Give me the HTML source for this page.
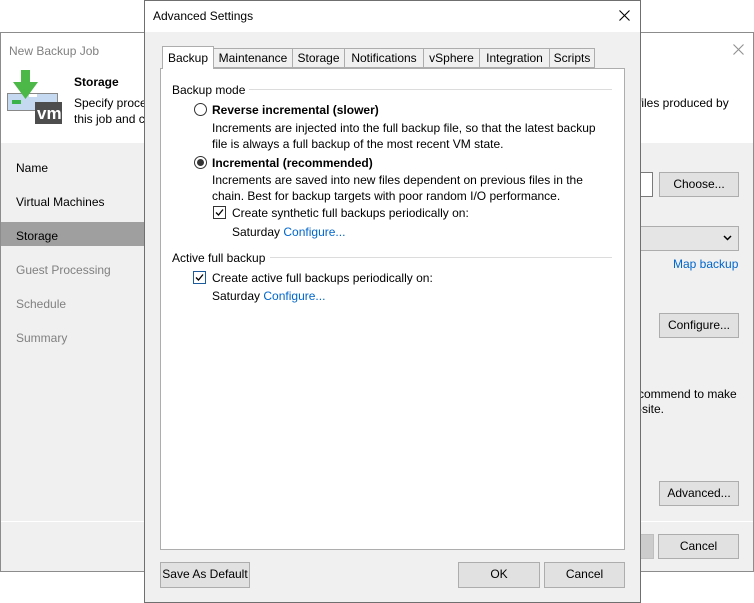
<!DOCTYPE html>
<html><head><style>
*{box-sizing:border-box;margin:0;padding:0}
body{width:754px;height:603px;background:#fff;position:relative;overflow:hidden;font-family:"Liberation Sans",sans-serif;font-size:12px;color:#000}
.a{position:absolute;white-space:nowrap}
.btn{position:absolute;background:#e1e1e1;border:1px solid #adadad;text-align:center;line-height:23px;font-size:12px}
.lk{color:#0066cc}
.tab{position:absolute;top:48px;height:20px;border:1px solid #adadad;background:#f0f0f0;line-height:19px;text-align:center;font-size:12px}
</style></head><body>
<div class="a" style="left:0;top:32px;width:754px;height:540px;border:1px solid #8c8c8c;background:#f0f0f0"></div>
<div class="a" style="left:1px;top:33px;width:752px;height:110px;background:#fff"></div>
<div class="a" style="left:9px;top:44px;color:#808080">New Backup Job</div>
<svg class="a" style="left:733px;top:44px" width="11" height="11"><path d="M0.5 0.5L10.5 10.5M10.5 0.5L0.5 10.5" stroke="#909090" stroke-width="1.1"/></svg>
<svg class="a" style="left:6px;top:70px" width="56" height="56">
<rect x="1.5" y="23.5" width="50" height="17" fill="#c5daf0" stroke="#888"/>
<rect x="6" y="30" width="9" height="4" fill="#3ab44a"/>
<rect x="23" y="24" width="8" height="3" fill="#fff"/>
<rect x="29" y="32" width="30" height="22" fill="#4d4d4d"/>
<text x="31" y="49" fill="#fff" font-family="Liberation Sans" font-weight="bold" font-size="17">vm</text>
<rect x="15" y="0" width="9" height="14" fill="#4cb848"/>
<polygon points="7,12 32,12 19.5,29" fill="#4cb848"/>
</svg>
<div class="a" style="left:74px;top:75px;font-weight:bold">Storage</div>
<div class="a" style="left:74px;top:96px">Specify proce</div>
<div class="a" style="left:74px;top:112px">this job and c</div>
<div class="a" style="left:638px;top:96px">files produced by</div>
<div class="a" style="left:1px;top:222px;width:143px;height:24px;background:#9f9f9f"></div>
<div class="a" style="left:16px;top:161px">Name</div>
<div class="a" style="left:16px;top:195px">Virtual Machines</div>
<div class="a" style="left:16px;top:229px">Storage</div>
<div class="a" style="left:16px;top:263px;color:#808080">Guest Processing</div>
<div class="a" style="left:16px;top:297px;color:#808080">Schedule</div>
<div class="a" style="left:16px;top:331px;color:#808080">Summary</div>
<div class="a" style="left:620px;top:172px;width:33px;height:25px;background:#fff;border:1px solid #7a7a7a"></div>
<div class="btn" style="left:659px;top:172px;width:80px;height:25px">Choose...</div>
<div class="a" style="left:620px;top:226px;width:119px;height:25px;background:#e5e5e5;border:1px solid #adadad"></div>
<svg class="a" style="left:723px;top:235px" width="9" height="6"><path d="M1 1l3.5 3.5L8 1" fill="none" stroke="#000" stroke-width="1.5"/></svg>
<div class="a lk" style="left:673px;top:257px">Map backup</div>
<div class="btn" style="left:659px;top:313px;width:80px;height:25px">Configure...</div>
<div class="a" style="left:638px;top:387px">commend to make</div>
<div class="a" style="left:638px;top:402px">-site.</div>
<div class="btn" style="left:659px;top:481px;width:80px;height:25px">Advanced...</div>
<div class="a" style="left:1px;top:521px;width:752px;height:1px;background:#fff"></div>
<div class="btn" style="left:620px;top:534px;width:34px;height:25px;background:#cccccc;border-color:#bfbfbf"></div>
<div class="btn" style="left:658px;top:534px;width:81px;height:25px">Cancel</div>
<div class="a" style="left:144px;top:0;width:497px;height:603px;border:1px solid #6f6f6f;background:#f0f0f0"></div>
<div class="a" style="left:145px;top:1px;width:495px;height:31px;background:#fff"></div>
<div class="a" style="left:153px;top:9px">Advanced Settings</div>
<svg class="a" style="left:619px;top:10px" width="11" height="11"><path d="M0.5 0.5L10.5 10.5M10.5 0.5L0.5 10.5" stroke="#000" stroke-width="1.1"/></svg>
<div class="a" style="left:160px;top:68px;width:465px;height:482px;background:#fff;border:1px solid #adadad"></div>
<div class="tab" style="left:213px;width:80px">Maintenance</div>
<div class="tab" style="left:292px;width:53px">Storage</div>
<div class="tab" style="left:344px;width:80px">Notifications</div>
<div class="tab" style="left:423px;width:57px">vSphere</div>
<div class="tab" style="left:479px;width:71px">Integration</div>
<div class="tab" style="left:549px;width:46px">Scripts</div>
<div class="tab" style="left:162px;top:46px;width:52px;height:23px;background:#fff;border-bottom:none;line-height:23px">Backup</div>
<div class="a" style="left:172px;top:83px">Backup mode</div>
<div class="a" style="left:249px;top:89px;width:363px;height:1px;background:#dcdcdc"></div>
<div class="a" style="left:194px;top:103px;width:13px;height:13px;border:1px solid #333;border-radius:50%;background:#fff"></div>
<div class="a" style="left:212px;top:103px;font-weight:bold">Reverse incremental (slower)</div>
<div class="a" style="left:212px;top:121px">Increments are injected into the full backup file, so that the latest backup</div>
<div class="a" style="left:212px;top:137px">file is always a full backup of the most recent VM state.</div>
<div class="a" style="left:194px;top:156px;width:13px;height:13px;border:1px solid #333;border-radius:50%;background:#fff"></div>
<div class="a" style="left:197px;top:159px;width:7px;height:7px;border-radius:50%;background:#333"></div>
<div class="a" style="left:212px;top:156px;font-weight:bold">Incremental (recommended)</div>
<div class="a" style="left:212px;top:173px">Increments are saved into new files dependent on previous files in the</div>
<div class="a" style="left:212px;top:189px">chain. Best for backup targets with poor random I/O performance.</div>
<svg class="a" style="left:213px;top:206px" width="13" height="13"><rect x="0.5" y="0.5" width="12" height="12" fill="#fff" stroke="#333"/><path d="M3 6.5l2.5 2.5 4.5-5.5" fill="none" stroke="#000" stroke-width="1.3"/></svg>
<div class="a" style="left:232px;top:206px">Create synthetic full backups periodically on:</div>
<div class="a" style="left:232px;top:225px">Saturday <span class="lk">Configure...</span></div>
<div class="a" style="left:172px;top:251px">Active full backup</div>
<div class="a" style="left:270px;top:257px;width:342px;height:1px;background:#dcdcdc"></div>
<svg class="a" style="left:193px;top:271px" width="13" height="13"><rect x="0.5" y="0.5" width="12" height="12" fill="#fff" stroke="#1c5c9c"/><path d="M3 6.5l2.5 2.5 4.5-5.5" fill="none" stroke="#000" stroke-width="1.3"/></svg>
<div class="a" style="left:212px;top:271px">Create active full backups periodically on:</div>
<div class="a" style="left:212px;top:289px">Saturday <span class="lk">Configure...</span></div>
<div class="btn" style="left:160px;top:562px;width:90px;height:26px">Save As Default</div>
<div class="btn" style="left:458px;top:562px;width:82px;height:26px">OK</div>
<div class="btn" style="left:544px;top:562px;width:81px;height:26px">Cancel</div>
</body></html>
